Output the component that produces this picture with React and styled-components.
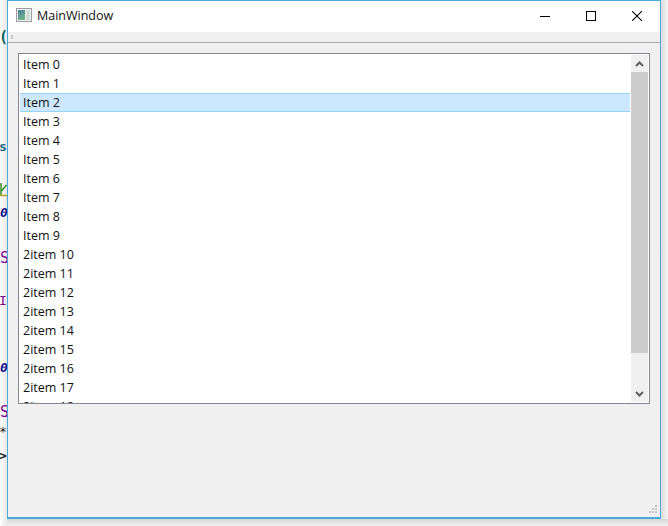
import React from 'react';
import styled, { createGlobalStyle } from 'styled-components';

const Global = createGlobalStyle`
  html, body { margin: 0; padding: 0; background: #e6e6e6; }
  body { width: 668px; height: 526px; overflow: hidden; font-family: "Open Sans", "Noto Sans", sans-serif; }
`;

const Desktop = styled.div`
  position: relative;
  width: 668px;
  height: 526px;
  box-sizing: border-box;
  padding: 0 7px 7px 7px;
  background: linear-gradient(90deg, #ffffff 0, #f4f4f4 3px, #e8e8e8 7px);
  overflow: hidden;
`;

const Behind = styled.span`
  position: absolute;
  font-family: "DejaVu Sans Mono", "Liberation Mono", monospace;
  font-size: ${p => p.$size || 13}px;
  line-height: 16px;
  left: ${p => p.$left || 0}px;
  top: ${p => p.$top}px;
  color: ${p => p.$color};
  white-space: nowrap;
  font-weight: ${p => (p.$bold ? 700 : 400)};
  font-style: ${p => (p.$italic ? 'italic' : 'normal')};
`;

const BehindMark = styled.svg`
  position: absolute;
  left: 0;
  top: 182px;
  width: 7px;
  height: 15px;
`;

const Shadow = styled.div`
  position: absolute;
  left: 661px;
  top: 0;
  right: 0;
  bottom: 0;
  background: linear-gradient(90deg, #dcdcdc, #f4f4f4);
`;

const Bottom = styled.div`
  position: absolute;
  left: 7px;
  right: 0;
  top: 519px;
  bottom: 0;
  background: linear-gradient(180deg, #d8d8d8, #f2f2f2);
`;

const Window = styled.div`
  position: relative;
  z-index: 1;
  width: 654px;
  height: 519px;
  box-sizing: border-box;
  border: 1px solid #4aa9dc;
  border-bottom-width: 2px;
  background: #f0f0f0;
  display: flex;
  flex-direction: column;
`;

const TitleBar = styled.header`
  height: 31px;
  flex: none;
  background: #fff;
  display: flex;
  align-items: center;
  padding-left: 8px;
`;

const AppIcon = styled.svg`
  width: 16px;
  height: 14px;
  flex: none;
  margin-right: 5px;
  margin-top: -3px;
`;

const Title = styled.span`
  font-size: 12.5px;
  color: #111;
  flex: 1;
  margin-top: -3px;
`;

const WinButton = styled.button`
  width: 46px;
  height: 31px;
  border: 0;
  padding: 0;
  background: none;
  display: flex;
  align-items: center;
  justify-content: center;
  margin-top: -2px;
`;

const ToolStrip = styled.div`
  height: 10px;
  flex: none;
  display: flex;
  align-items: center;
  padding-left: 3px;
  border-bottom: 1px solid #a9a9a9;
`;

const Grip = styled.i`
  width: 2px;
  height: 4px;
  background: #c8c8c8;
`;

const Central = styled.main`
  flex: 1;
  padding: 10px 10px 0 10px;
  position: relative;
`;

const ListBox = styled.div`
  height: 351px;
  box-sizing: border-box;
  border: 1px solid #828790;
  background: #fff;
  padding: 1px 1px 0 1px;
  display: flex;
  overflow: hidden;
`;

const Rows = styled.ul`
  flex: 1;
  margin: 0;
  padding: 0;
  list-style: none;
  overflow: hidden;
`;

const Row = styled.li`
  height: 19px;
  box-sizing: border-box;
  padding-left: 3px;
  font-size: 12.5px;
  line-height: 19px;
  color: #111;
  white-space: nowrap;
  ${p => p.$selected && `
    background: #cce8ff;
    border-top: 1px solid #99d1ff;
    border-bottom: 1px solid #99d1ff;
    line-height: 17px;
  `}
`;

const ScrollBar = styled.div`
  width: 17px;
  flex: none;
  background: #f0f0f0;
  margin: 0 0 1px 1px;
  display: flex;
  flex-direction: column;
  align-items: stretch;
`;

const Arrow = styled.div`
  height: 17px;
  flex: none;
  display: flex;
  align-items: center;
  justify-content: center;
`;

const Thumb = styled.div`
  height: 281px;
  flex: none;
  background: #cdcdcd;
`;

const Track = styled.div`
  flex: 1;
`;

const SizeGrip = styled.svg`
  position: absolute;
  right: 3px;
  bottom: 3px;
  width: 9px;
  height: 9px;
`;

const items = [
  ...Array.from({ length: 10 }, (_, i) => `Item ${i}`),
  ...Array.from({ length: 9 }, (_, i) => `2item ${i + 10}`),
];

const behind = [
  { top: 29, left: -1, size: 15, color: '#0b5f5f', text: '(', bold: true },
  { top: 139, left: -1, color: '#1a6a85', text: 's', bold: true },
  { top: 205, left: 0, color: '#10108f', text: '0', italic: true, bold: true },
  { top: 250, left: 0, size: 15, color: '#800090', text: 'S' },
  { top: 293, left: -1, color: '#800090', text: 'I' },
  { top: 360, left: 0, color: '#10108f', text: '0', italic: true, bold: true },
  { top: 404, left: 0, size: 15, color: '#800090', text: 'S' },
  { top: 424, left: -1, color: '#222', text: '*' },
  { top: 448, left: -1, color: '#222', text: '>', bold: true },
];

export default function App() {
  return (
    <Desktop>
      <Global />
      {behind.map(b => (
        <Behind key={b.top} $top={b.top} $left={b.left} $size={b.size} $color={b.color} $bold={b.bold} $italic={b.italic}>{b.text}</Behind>
      ))}
      <BehindMark viewBox="0 0 7 15">
        <path d="M1 1V13" stroke="#2e8b20" strokeWidth="1.5" fill="none" />
        <path d="M1.5 9L6.5 3" stroke="#2e8b20" strokeWidth="1.5" fill="none" />
        <path d="M0 13.5H7" stroke="#b8a020" strokeWidth="1.5" fill="none" />
      </BehindMark>
      <Shadow />
      <Bottom />
      <Window>
        <TitleBar>
          <AppIcon viewBox="0 0 16 14">
            <defs>
              <linearGradient id="appIconFill" x1="0" y1="0" x2="0.4" y2="1">
                <stop offset="0" stopColor="#4a7f9c" />
                <stop offset="1" stopColor="#6fb08c" />
              </linearGradient>
            </defs>
            <rect x="0.5" y="0.5" width="15" height="13" fill="#f2f2f2" stroke="#9a9ea2" />
            <rect x="2" y="2" width="7" height="10" fill="url(#appIconFill)" />
            <rect x="10" y="2" width="4" height="10" fill="#cfdcd8" />
          </AppIcon>
          <Title>MainWindow</Title>
          <WinButton aria-label="Minimize">
            <svg width="10" height="10" viewBox="0 0 10 10"><path d="M0 5.5H10" stroke="#000" /></svg>
          </WinButton>
          <WinButton aria-label="Maximize">
            <svg width="10" height="10" viewBox="0 0 10 10"><rect x="0.5" y="0.5" width="9" height="9" fill="none" stroke="#000" /></svg>
          </WinButton>
          <WinButton aria-label="Close">
            <svg width="10" height="10" viewBox="0 0 10 10"><path d="M0 0L10 10M10 0L0 10" stroke="#000" strokeWidth="1.05" /></svg>
          </WinButton>
        </TitleBar>
        <ToolStrip><Grip /></ToolStrip>
        <Central>
          <ListBox>
            <Rows>
              {items.map((t, i) => <Row key={t} $selected={i === 2}>{t}</Row>)}
            </Rows>
            <ScrollBar>
              <Arrow>
                <svg width="9" height="6" viewBox="0 0 9 6"><path d="M1 5L4.5 1.5L8 5" fill="none" stroke="#606060" strokeWidth="2" /></svg>
              </Arrow>
              <Thumb />
              <Track />
              <Arrow>
                <svg width="9" height="6" viewBox="0 0 9 6"><path d="M1 1L4.5 4.5L8 1" fill="none" stroke="#606060" strokeWidth="2" /></svg>
              </Arrow>
            </ScrollBar>
          </ListBox>
          <SizeGrip viewBox="0 0 9 9" shapeRendering="crispEdges">
            <path d="M7 0h2v2H7zM4 3h2v2H4zM7 3h2v2H7zM1 6h2v2H1zM4 6h2v2H4zM7 6h2v2H7z" fill="#c4c4c4" />
          </SizeGrip>
        </Central>
      </Window>
    </Desktop>
  );
}
